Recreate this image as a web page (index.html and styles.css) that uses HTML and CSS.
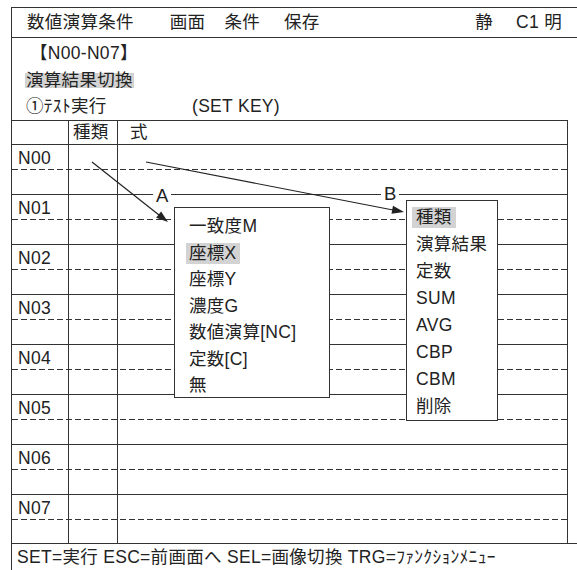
FILE: index.html
```html
<!DOCTYPE html>
<html lang="ja">
<head>
  <meta charset="UTF-8" />
  <meta name="viewport" content="width=device-width, initial-scale=1.0"/>
  <title>数値演算条件</title>
  <link rel="stylesheet" href="styles.css">
</head>
<body>
  <div class="screen">
    <div class="menubar">
      <span class="title">数値演算条件</span>
      <span class="menu-item m-screen">画面</span>
      <span class="menu-item m-cond">条件</span>
      <span class="menu-item m-save">保存</span>
      <span class="status">静</span>
      <span class="status cam">C1 明</span>
    </div>

    <div class="info">
      <div class="info-line range">【N00-N07】</div>
      <div class="info-line"><span class="hl">演算結果切換</span></div>
      <div class="info-line"><span class="test">①ﾃｽﾄ実行</span>(SET KEY)</div>
    </div>

    <div class="grid">
      <div class="row head"><div class="cell"></div><div class="cell">種類</div><div class="cell">式</div></div>

      <div class="row upper"><div class="cell">N00</div><div class="cell"></div><div class="cell"></div></div>
      <div class="row lower"><div class="cell"></div><div class="cell"></div><div class="cell"></div></div>
      <div class="row upper"><div class="cell">N01</div><div class="cell"></div><div class="cell"></div></div>
      <div class="row lower"><div class="cell"></div><div class="cell"></div><div class="cell"></div></div>
      <div class="row upper"><div class="cell">N02</div><div class="cell"></div><div class="cell"></div></div>
      <div class="row lower"><div class="cell"></div><div class="cell"></div><div class="cell"></div></div>
      <div class="row upper"><div class="cell">N03</div><div class="cell"></div><div class="cell"></div></div>
      <div class="row lower"><div class="cell"></div><div class="cell"></div><div class="cell"></div></div>
      <div class="row upper"><div class="cell">N04</div><div class="cell"></div><div class="cell"></div></div>
      <div class="row lower"><div class="cell"></div><div class="cell"></div><div class="cell"></div></div>
      <div class="row upper"><div class="cell">N05</div><div class="cell"></div><div class="cell"></div></div>
      <div class="row lower"><div class="cell"></div><div class="cell"></div><div class="cell"></div></div>
      <div class="row upper"><div class="cell">N06</div><div class="cell"></div><div class="cell"></div></div>
      <div class="row lower"><div class="cell"></div><div class="cell"></div><div class="cell"></div></div>
      <div class="row upper"><div class="cell">N07</div><div class="cell"></div><div class="cell"></div></div>
      <div class="row lower last"><div class="cell"></div><div class="cell"></div><div class="cell"></div></div>

      <!-- arrows from the cells to the popups -->
      <svg class="arrows" width="556" height="423" viewBox="0 0 556 423">
        <line x1="80" y1="41" x2="147" y2="94" stroke="#222" stroke-width="1.2"/>
        <polygon points="156,101 144.1,96.7 149.1,90.4" fill="#222"/>
        <line x1="134" y1="41" x2="381" y2="89" stroke="#222" stroke-width="1.2"/>
        <polygon points="392,91 379.5,92.7 381,84.8" fill="#222"/>
      </svg>
      <span class="tag tag-a">A</span>
      <span class="tag tag-b">B</span>

      <ul class="popup popup-a">
        <li><span>一致度M</span></li>
        <li><span class="sel">座標X</span></li>
        <li><span>座標Y</span></li>
        <li><span>濃度G</span></li>
        <li><span>数値演算[NC]</span></li>
        <li><span>定数[C]</span></li>
        <li><span>無</span></li>
      </ul>

      <ul class="popup popup-b">
        <li><span class="sel">種類</span></li>
        <li><span>演算結果</span></li>
        <li><span>定数</span></li>
        <li><span>SUM</span></li>
        <li><span>AVG</span></li>
        <li><span>CBP</span></li>
        <li><span>CBM</span></li>
        <li><span>削除</span></li>
      </ul>
    </div>

    <div class="footer">SET=実行 ESC=前画面へ SEL=画像切換 TRG=ﾌｧﾝｸｼｮﾝﾒﾆｭｰ</div>
  </div>
</body>
</html>
```

FILE: styles.css
```css
html, body {
  margin: 0;
  padding: 0;
  background: #fff;
  overflow: hidden;
}

body {
  font-family: "Liberation Sans", "Noto Sans CJK JP", sans-serif;
  font-size: 17.5px;
  letter-spacing: 0.3px;
  color: #222;
}

.screen {
  margin: 7px 0 0 11px;
  height: 563px;
  border-left: 1px solid #333;
  border-top: 1px solid #333;
  display: flex;
  flex-direction: column;
}

/* top bar */
.menubar {
  height: 29px;
  line-height: 29px;
  border-bottom: 1px solid #333;
  display: flex;
  padding-left: 15px;
  white-space: nowrap;
}

.m-screen { margin-left: 36px; }
.m-cond { margin-left: 19px; }
.m-save { margin-left: 24px; }

.status {
  margin-left: auto;
}

.status.cam {
  margin-left: 23px;
  margin-right: 15px;
}

/* info lines */
.info {
  height: 82px;
  box-sizing: border-box;
  padding: 2px 0 0 14px;
}

.info-line {
  height: 26.5px;
  line-height: 26.5px;
  white-space: nowrap;
}

.range {
  margin-left: 4px;
}

.hl {
  display: inline-block;
  line-height: 15px;
  background: #d3d3d3;
  padding: 0 1px;
  margin-left: -1px;
}

.test {
  display: inline-block;
  width: 166px;
}

/* table */
.grid {
  position: relative;
  border-top: 1px solid #333;
  width: 556px;
}

.row {
  display: grid;
  grid-template-columns: 57px 49px 450px;
  height: 25px;
  box-sizing: border-box;
}

.row.head {
  height: 24px;
  border-bottom: 1px solid #333;
}

.row.upper {
  background: repeating-linear-gradient(90deg, #333 0 6px, transparent 6px 9px) left bottom / 100% 1px no-repeat;
}

.row.lower {
  border-bottom: 1px solid #333;
}

.row.last {
  height: 23px;
  border-bottom: none;
}

.cell {
  border-right: 1px solid #333;
  line-height: 24px;
  padding-left: 6px;
  white-space: nowrap;
}

.row.head .cell {
  line-height: 23px;
  padding-left: 4px;
}

.row.head .cell:last-child {
  padding-left: 12px;
}

.row.upper .cell:first-child {
  line-height: 26px;
}

.arrows {
  position: absolute;
  left: 0;
  top: 0;
  overflow: visible;
  pointer-events: none;
}

.tag {
  position: absolute;
  background: #fff;
  line-height: 16px;
  padding: 0 3px;
  letter-spacing: 0;
  font-size: 18.5px;
}

.tag-a { left: 141px; top: 67px; }
.tag-b { left: 369px; top: 65px; }

.popup {
  position: absolute;
  list-style: none;
  margin: 0;
  background: #fff;
  border: 1px solid #333;
  box-sizing: border-box;
  white-space: nowrap;
}

.popup li span {
  display: inline-block;
  line-height: 21px;
}

.popup .sel {
  background: #d3d3d3;
}

.popup-a {
  left: 162px;
  top: 86px;
  width: 156px;
  height: 191px;
  padding: 5px 0 0 11px;
}

.popup-a li {
  height: 26.5px;
  line-height: 26.5px;
}

.popup-a li span {
  padding: 0 3px;
}

.popup-b {
  left: 394px;
  top: 79px;
  width: 92px;
  height: 221px;
  padding: 2.5px 0 0 5px;
}

.popup-b li {
  height: 27px;
  line-height: 27px;
}

.popup-b li span {
  padding: 0 4px;
}

/* bottom help line */
.footer {
  border-top: 1px solid #333;
  line-height: 26px;
  padding-left: 5px;
  white-space: nowrap;
}
```
